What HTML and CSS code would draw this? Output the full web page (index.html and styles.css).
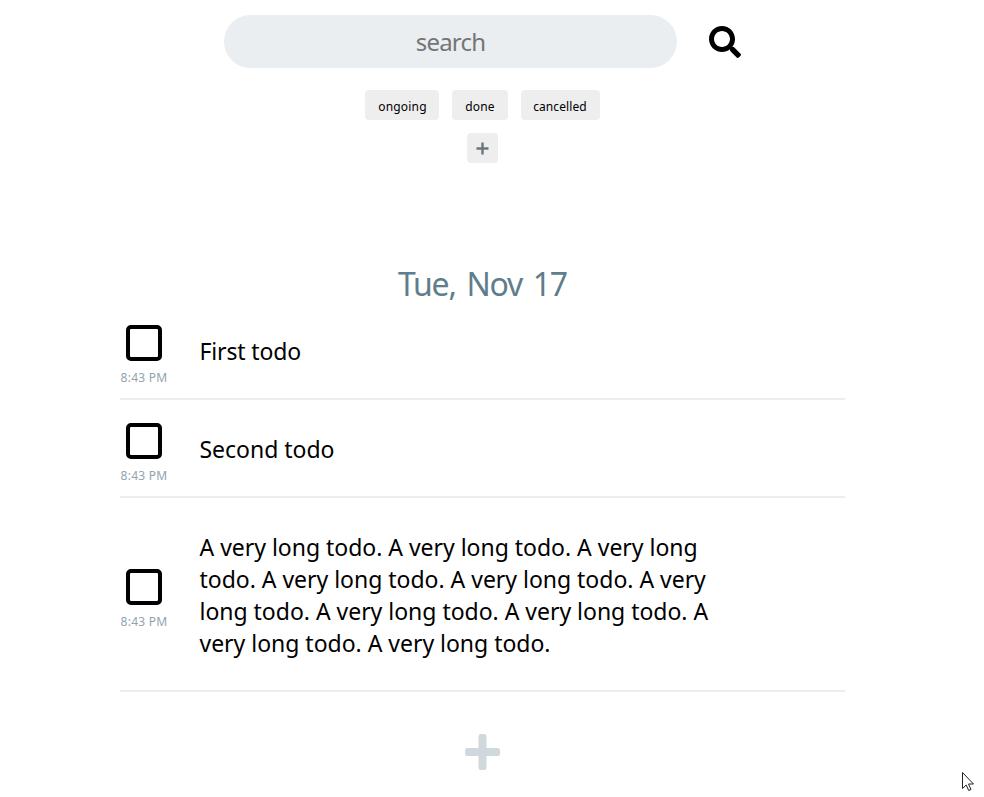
FILE: index.html
```html
<!DOCTYPE html>
<html lang="en">
<head>
<meta charset="utf-8">
<title>Todos</title>
<link rel="stylesheet" href="styles.css">
</head>
<body>
<main class="app">
  <form class="search">
    <input class="search-input" type="text" placeholder="search" aria-label="search">
    <button class="search-button" type="button" aria-label="Search">
      <svg viewBox="0 0 512 512" width="32" height="32"><path d="M505 442.700L405.300 343c-4.500-4.500-10.600-7-17-7H372c27.600-35.300 44-79.700 44-128C416 93.100 322.900 0 208 0S0 93.100 0 208s93.100 208 208 208c48.300 0 92.700-16.400 128-44v16.300c0 6.400 2.500 12.500 7 17l99.700 99.700c9.400 9.400 24.600 9.400 33.900 0l28.300-28.300c9.400-9.400 9.400-24.600.1-34zM208 336c-70.700 0-128-57.200-128-128 0-70.700 57.200-128 128-128 70.700 0 128 57.200 128 128 0 70.700-57.200 128-128 128z"/></svg>
    </button>
  </form>
  <div class="filters">
    <button class="chip ongoing">ongoing</button>
    <button class="chip done">done</button>
    <button class="chip cancelled">cancelled</button>
  </div>
  <button class="chip add-filter" aria-label="Add filter">
    <svg viewBox="0 0 13 13" width="13" height="13"><path d="M6.500 .5v12M.5 6.500h12"/></svg>
  </button>
  <h1 class="date">Tue, Nov 17</h1>
  <ul class="todos">
    <li class="todo">
      <div class="status"><span class="box"></span><time>8:43 PM</time></div>
      <p class="text first">First todo</p>
    </li>
    <li class="todo">
      <div class="status"><span class="box"></span><time>8:43 PM</time></div>
      <p class="text">Second todo</p>
    </li>
    <li class="todo long">
      <div class="status"><span class="box"></span><time>8:43 PM</time></div>
      <p class="text">A very long todo. A very long todo. A very long<br>todo. A very long todo. A very long todo. A very<br>long todo. A very long todo. A very long todo. A<br>very long todo. A very long todo.</p>
    </li>
  </ul>
  <button class="add-todo" aria-label="Add todo">
    <svg viewBox="0 0 35 36" width="35" height="36"><path d="M16 0h3a2.500 2.500 0 0 1 2.500 2.500V14H32.500a2.500 2.500 0 0 1 2.500 2.500v3a2.500 2.500 0 0 1-2.500 2.500H21.500v11.500a2.500 2.500 0 0 1-2.500 2.500h-3a2.500 2.500 0 0 1-2.500-2.500V22H2.500A2.500 2.500 0 0 1 0 19.500v-3A2.500 2.500 0 0 1 2.500 14H13.500V2.500A2.500 2.500 0 0 1 16 0z"/></svg>
  </button>
</main>
<svg class="cursor" viewBox="0 0 12 19" width="12" height="19"><path d="M.5.500v16l3.700-3.500 2.500 5.500 2.300-1-2.500-5.500h5z"/></svg>
</body>
</html>
```
FILE: styles.css
```css
* { box-sizing: border-box; }
body {
  margin: 0;
  height: 797px;
  overflow: hidden;
  background: #fff;
  color: #000;
  font-family: "Noto Sans", "Open Sans", sans-serif;
}
button { border: 0; padding: 0; background: none; font-family: inherit; }
svg { display: block; }
.app {
  width: 725px;
  margin-left: 120px;
  padding-top: 15px;
  display: flex;
  flex-direction: column;
  align-items: center;
}
.search {
  display: flex;
  align-items: center;
  align-self: flex-start;
  gap: 32px;
  margin: 0;
  padding-left: 104px;
}
.search-input {
  width: 453px;
  height: 53px;
  border: 0;
  border-radius: 27px;
  padding: 0 0 1px;
  background: #eaeef1;
  font: 24px "Noto Sans", sans-serif;
  letter-spacing: -0.8px;
  text-align: center;
}
.search-input::placeholder { color: #757575; opacity: 1; }
.search-button { margin: 1px 0 0; }
.filters { display: flex; gap: 13px; margin-top: 22px; }
.chip {
  height: 30px;
  border-radius: 4px;
  background: #eee;
  color: #000;
  font-size: 12px;
  letter-spacing: 0.2px;
  line-height: 16px;
  padding-top: 4px;
  white-space: nowrap;
}
.ongoing { width: 74px; padding-left: 1px; }
.done { width: 56px; }
.cancelled { width: 79px; letter-spacing: 0.1px; padding-right: 1px; }
.add-filter { width: 31px; margin-top: 13px; padding: 0; display: grid; place-items: center; }
.add-filter path { fill: none; stroke: #6c757b; stroke-width: 2.4; }
.date {
  margin: 99px 0 0;
  height: 44px;
  line-height: 44px;
  font-size: 32px;
  font-weight: 400;
  letter-spacing: -1.2px;
  word-spacing: 3.500px;
  color: #607d8b;
  white-space: nowrap;
}
.todos { list-style: none; width: 100%; margin: -4px 0 0; padding: 0; }
.todo {
  height: 98px;
  border-bottom: 2px solid #eaeef1;
  display: flex;
  align-items: center;
}
.todo.long { height: 194px; }
.status {
  width: 48px;
  height: 62px;
  margin-top: 12px;
  display: flex;
  flex-direction: column;
  align-items: center;
}
.box { width: 36px; height: 36px; border: 4px solid #000; border-radius: 5px; flex: none; }
time {
  margin-top: 8px;
  font-size: 12px;
  line-height: 18px;
  letter-spacing: 0.25px;
  color: #90a4ae;
  white-space: nowrap;
}
.text {
  margin: 2px 0 0 31.500px;
  font-size: 23px;
  line-height: 32px;
  letter-spacing: -0.02px;
  white-space: nowrap;
}
.first { letter-spacing: -0.15px; }
.add-todo { margin-top: 42px; }
.add-todo path { fill: #cfd8dc; }
.cursor { position: absolute; left: 962px; top: 772px; }
.cursor path { fill: #fff; stroke: #222; }
```
